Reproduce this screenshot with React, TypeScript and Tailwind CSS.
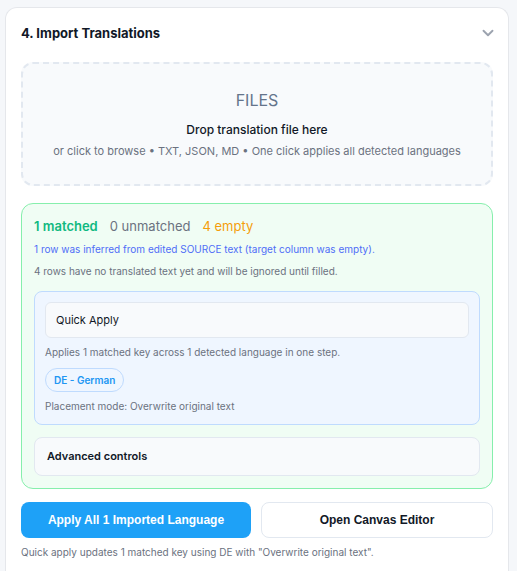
import React from "react";
import { ChevronDown } from "lucide-react";

export default function App() {
  const inter = { fontFamily: "Inter, 'Noto Sans', sans-serif" } as React.CSSProperties;
  return (
    <div className="min-h-[571px] bg-[#f5f7fa] pt-[7px] pl-[5px]" style={inter}>
      <div className="w-[504px] rounded-t-[12px] border border-b-0 border-[#e5e7eb] bg-white px-[15px] pt-[16px] pb-[12px]">
        <div className="flex items-center justify-between h-[20px] mb-[18px]">
          <div className="text-[13px] font-bold text-[#111827]">4. Import Translations</div>
          <ChevronDown size={18} strokeWidth={2.5} className="text-[#9ca3af] -mr-[4px] mt-[-2px]" />
        </div>

        <div className="flex flex-col items-center rounded-[12px] border-2 border-dashed border-[#e2e8f0] bg-[#f8fafc] pt-[24px] pb-[25px]">
          <div className="text-[16px] leading-[24px] text-[#64748b]">FILES</div>
          <div className="mt-[9px] text-[12px] leading-[18px] font-medium text-[#111827]">Drop translation file here</div>
          <div className="mt-[4px] text-[11px] leading-[16px] text-[#6b7280]">
            or click to browse • TXT, JSON, MD • One click applies all detected languages
          </div>
        </div>

        <div className="mt-[17px] rounded-[12px] border border-[#86efac] bg-[#f0fdf4] px-[12px] pt-[12px] pb-[12px]">
          <div className="flex items-center gap-[12px] text-[13px] leading-[20px]">
            <span className="font-semibold text-[#10b981]">1 matched</span>
            <span className="text-[#6b7280]">0 unmatched</span>
            <span className="text-[#f59e0b]">4 empty</span>
          </div>
          <div className="mt-[5px] text-[10px] leading-[16px] text-[#4f6ef7]">
            1 row was inferred from edited SOURCE text (target column was empty).
          </div>
          <div className="mt-[6px] text-[10px] leading-[16px] text-[#6b7280]">
            4 rows have no translated text yet and will be ignored until filled.
          </div>

          <div className="mt-[12px] rounded-[8px] border border-[#bfdbfe] bg-[#eff6ff] p-[10px]">
            <div className="flex h-[36px] items-center rounded-[6px] border border-[#e2e8f0] bg-[#f8fafc] px-[10px] text-[11px] text-[#111827]">
              Quick Apply
            </div>
            <div className="mt-[6px] text-[10px] leading-[16px] text-[#6b7280]">
              Applies 1 matched key across 1 detected language in one step.
            </div>
            <div className="mt-[8px] flex">
              <span className="flex h-[24px] items-center rounded-full border border-[#bfdbfe] bg-[#eff6ff] px-[8px] text-[10px] font-semibold text-[#2196f3]">
                DE - German
              </span>
            </div>
            <div className="mt-[6px] text-[10px] leading-[16px] text-[#6b7280]">
              Placement mode: Overwrite original text
            </div>
          </div>

          <div className="mt-[12px] flex h-[39px] items-center rounded-[8px] border border-[#e2e8f0] bg-[#f8fafc] px-[12px] text-[11px] font-semibold text-[#111827]">
            Advanced controls
          </div>
        </div>

        <div className="mt-[13px] grid grid-cols-[230px_1fr] gap-[10px]" style={{ fontFamily: "'Liberation Sans', Arial, sans-serif" }}>
          <button className="h-[36px] rounded-[8px] bg-[#1ea1f7] text-[12px] font-bold text-white">
            Apply All 1 Imported Language
          </button>
          <button className="h-[36px] rounded-[8px] border border-[#e2e8f0] bg-white text-[12px] font-bold text-[#111827]">
            Open Canvas Editor
          </button>
        </div>
        <div className="mt-[6px] text-[10px] leading-[16px] text-[#6b7280]">
          Quick apply updates 1 matched key using DE with "Overwrite original text".
        </div>
      </div>
    </div>
  );
}
